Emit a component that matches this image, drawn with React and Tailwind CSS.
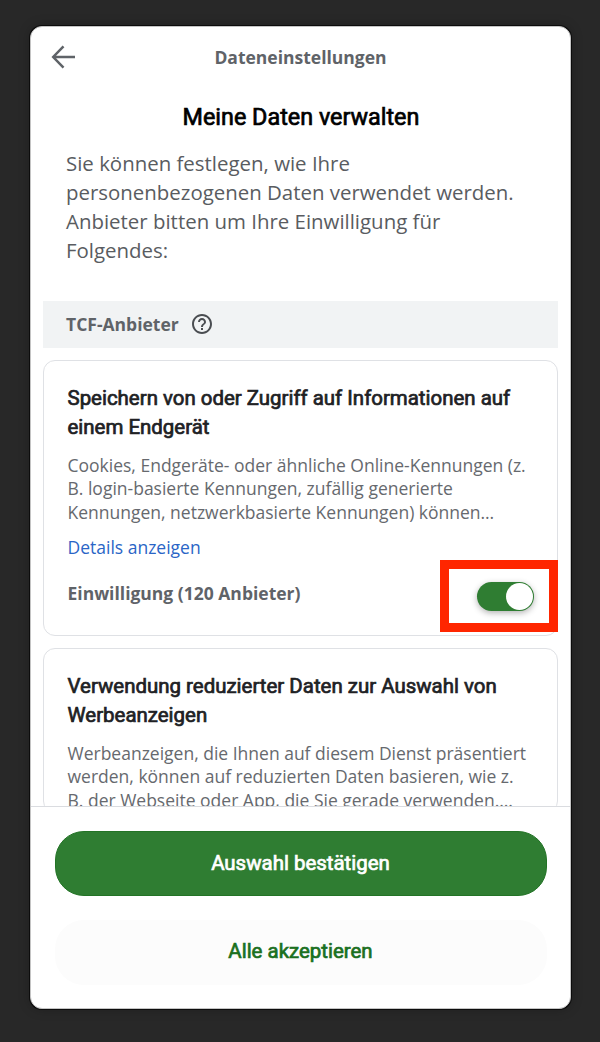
import React from "react";

const title =
  "font-['Roboto',sans-serif] font-normal text-[20.44px] leading-[29.2px] text-[#202124] [-webkit-text-stroke:0.7px_currentColor]";
const desc = "mt-[11.8px] text-[17.5px] leading-[23.35px] whitespace-nowrap text-[#66696e]";

function PurposeCard({ heading, description, children }) {
  return (
    <section className="shrink-0 rounded-[12px] border-[1.5px] border-[#dfe1e5] bg-white px-[23.5px] pt-[23px]">
      <h2 className={title}>
        {heading[0]}
        <br />
        {heading[1]}
      </h2>
      <p className={desc}>
        {description.map((line) => (
          <span key={line} className="block">{line}</span>
        ))}
      </p>
      {children}
    </section>
  );
}

export default function App() {
  return (
    <div className="flex h-[1042px] w-[600px] bg-[#282828] pt-[26px] pl-[30px] font-['Open_Sans',sans-serif]">
      <div className="flex h-[983px] w-[541px] flex-col overflow-hidden rounded-[12px] border border-[#c4c4c4] bg-white shadow-[0_0_0_1px_#0c0c0c,0_0_12px_rgba(0,0,0,0.25)]">
        <header className="grid h-[60px] shrink-0 grid-cols-[66px_1fr_66px] items-center">
          <svg className="ml-[20px] h-[26px] w-[26px]" viewBox="0 0 26 26" fill="none" stroke="#5f6368" strokeWidth="2.5">
            <path d="M24 13H2.8M12.5 2.3L2.2 13L12.5 23.7" />
          </svg>
          <h3 className="text-center text-[17.5px] font-bold text-[#5f6368]">Dateneinstellungen</h3>
        </header>

        <main className="flex min-h-0 flex-1 flex-col overflow-hidden px-[12px]">
          <h1 className="mt-[14px] shrink-0 pl-px text-center font-['Roboto',sans-serif] text-[23.36px] leading-[32px] font-normal text-black [-webkit-text-stroke:0.7px_currentColor]">
            Meine Daten verwalten
          </h1>
          <p className="mt-[16px] shrink-0 pl-[23px] text-[20.43px] leading-[29.1px] whitespace-nowrap text-[#595c61]">
            Sie können festlegen, wie Ihre
            <br />
            personenbezogenen Daten verwendet werden.
            <br />
            Anbieter bitten um Ihre Einwilligung für
            <br />
            Folgendes:
          </p>
          <div className="mt-[35.4px] flex h-[47px] shrink-0 items-center gap-[12px] bg-[#f1f3f4] pl-[23px]">
            <span className="text-[17.5px] font-bold text-[#5f6368]">TCF-Anbieter</span>
            <svg className="h-[22px] w-[22px]" viewBox="1 1 22 22" fill="#4a4d51">
              <path d="M11 18h2v-2h-2v2zm1-16C6.48 2 2 6.48 2 12s4.48 10 10 10 10-4.48 10-10S17.52 2 12 2zm0 18c-4.41 0-8-3.59-8-8s3.59-8 8-8 8 3.59 8 8-3.59 8-8 8zm0-14c-2.21 0-4 1.79-4 4h2c0-1.1.9-2 2-2s2 .9 2 2c0 2-3 1.75-3 5h2c0-2.25 3-2.5 3-5 0-2.21-1.79-4-4-4z" />
            </svg>
          </div>

          <div className="mt-[12px] flex flex-col gap-[12px]">
            <PurposeCard
              heading={["Speichern von oder Zugriff auf Informationen auf", "einem Endgerät"]}
              description={[
                "Cookies, Endgeräte- oder ähnliche Online-Kennungen (z.",
                "B. login-basierte Kennungen, zufällig generierte",
                "Kennungen, netzwerkbasierte Kennungen) können…",
              ]}
            >
              <a className="mt-[10.5px] block text-[17.5px] leading-[24px] text-[#2a65c6]">Details anzeigen</a>
              <div className="relative flex h-[76.4px] pt-[22px]">
                <span className="text-[17.5px] leading-[24px] font-bold text-[#5f6368]">
                  Einwilligung (120 Anbieter)
                </span>
                <div className="absolute top-[1.5px] -right-[24px] flex h-[72px] w-[118px] items-center border-[9px] border-[#ff2600] bg-white pl-[28px]">
                  <div className="flex h-[29px] w-[57px] items-center justify-end rounded-full bg-[#2f7d32] pr-px shadow-[0_2px_6px_rgba(0,0,0,0.3)]">
                    <div className="h-[27px] w-[27px] rounded-full bg-white" />
                  </div>
                </div>
              </div>
            </PurposeCard>
            <PurposeCard
              heading={["Verwendung reduzierter Daten zur Auswahl von", "Werbeanzeigen"]}
              description={[
                "Werbeanzeigen, die Ihnen auf diesem Dienst präsentiert",
                "werden, können auf reduzierten Daten basieren, wie z.",
                "B. der Webseite oder App, die Sie gerade verwenden.…",
              ]}
            />
          </div>
        </main>

        <footer className="flex h-[202px] shrink-0 flex-col gap-[24px] border-t-[1.5px] border-[#dadce0] px-[23.5px] pt-[24px] font-['Roboto',sans-serif] text-[20.44px]">
          <button className="h-[65px] rounded-[29px] border border-[#237326] bg-[#2f7d32] text-white [-webkit-text-stroke:0.7px_currentColor]">
            Auswahl bestätigen
          </button>
          <button className="h-[65px] rounded-[29px] bg-[#fcfcfc] pb-[2px] text-[#1b701f] [-webkit-text-stroke:0.7px_currentColor]">
            Alle akzeptieren
          </button>
        </footer>
      </div>
    </div>
  );
}
